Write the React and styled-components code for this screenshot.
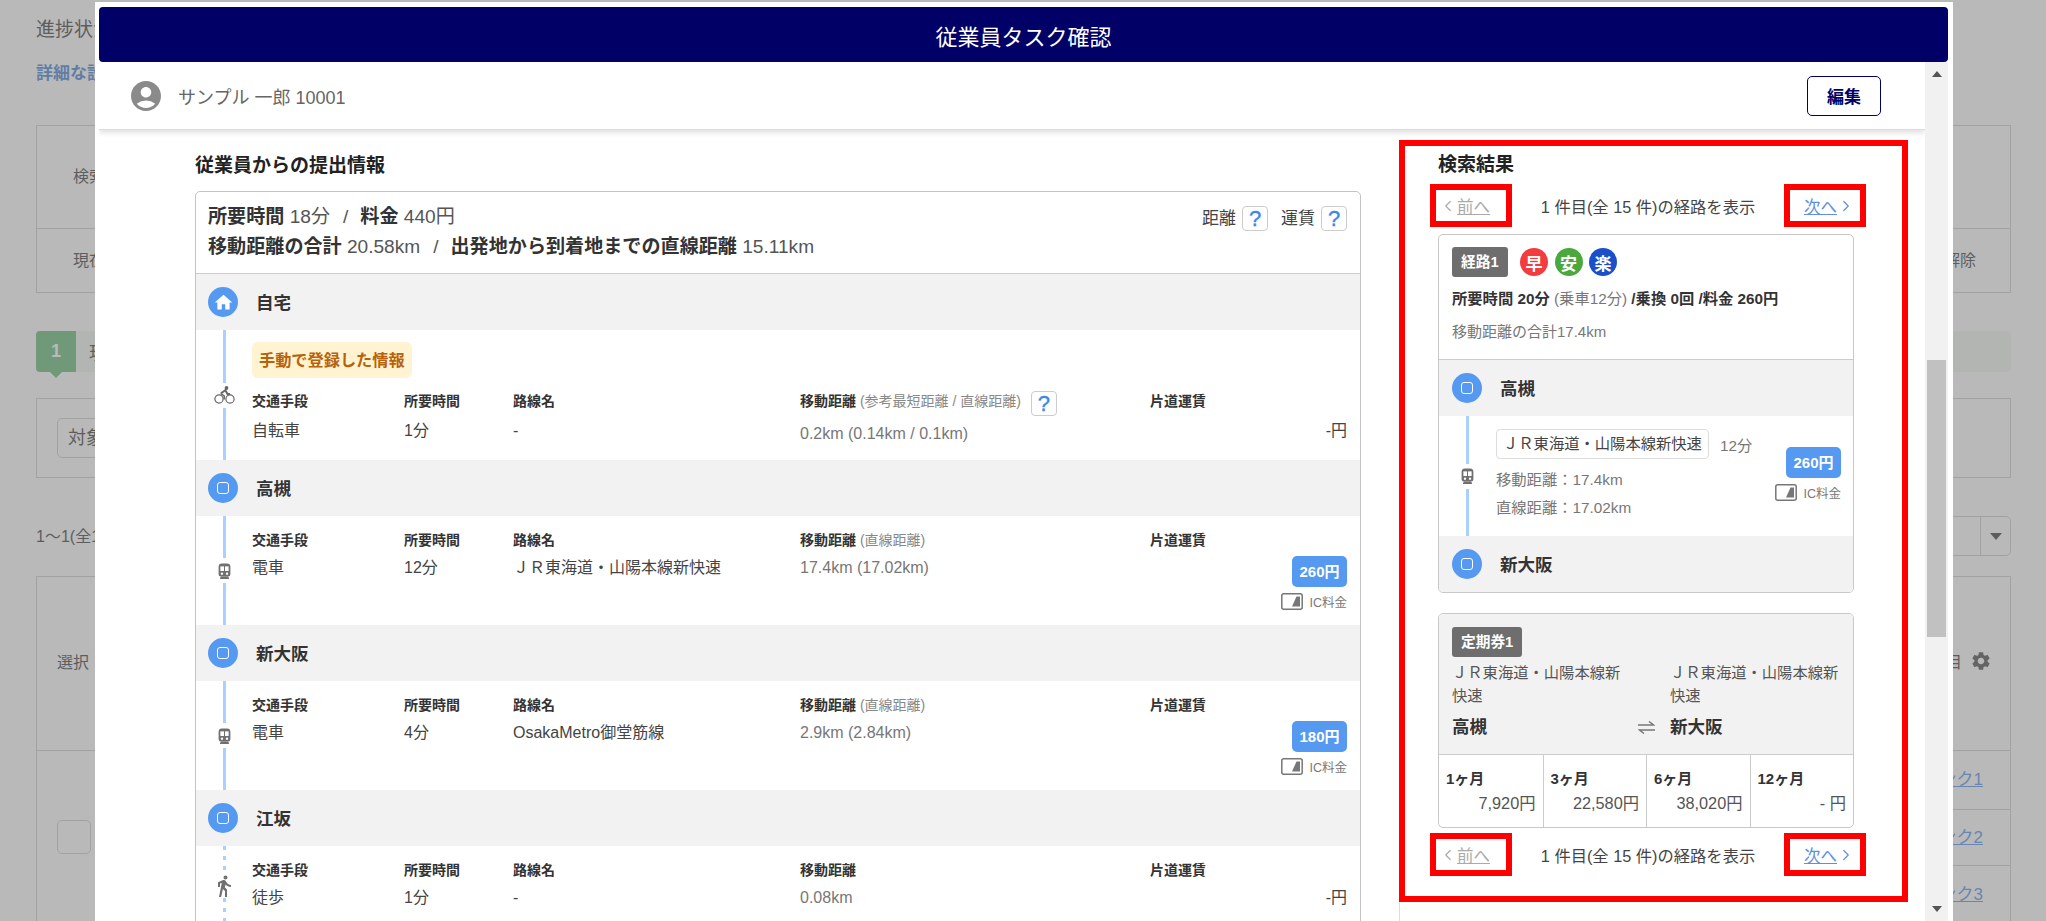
import React from "react";
import styled, { createGlobalStyle } from "styled-components";
import { MdAccountCircle, MdHome, MdDirectionsWalk, MdSettings } from "react-icons/md";
import { ChevronLeft, ChevronRight } from "lucide-react";

const GlobalStyle = createGlobalStyle`
  html, body {
    margin: 0;
    height: 100%;
    overflow: hidden;
  }
  body {
    font-family: "Liberation Sans", "Noto Sans CJK JP", sans-serif;
    color: #333;
    background: #fff;
  }
  * {
    box-sizing: border-box;
  }
`;

const TrainIcon = () => (
  <svg width="13" height="16" viewBox="0 0 15 19">
    <path d="M4.500 .5h6a4 4 0 0 1 4 4V13a3 3 0 0 1-3 3h-8a3 3 0 0 1-3-3V4.500a4 4 0 0 1 4-4z" fill="#707070" />
    <rect x="2.600" y="4" width="4.300" height="5.500" fill="#fff" />
    <rect x="8.100" y="4" width="4.300" height="5.500" fill="#fff" />
    <circle cx="4.500" cy="12.700" r="1.400" fill="#fff" />
    <circle cx="10.500" cy="12.700" r="1.400" fill="#fff" />
    <path d="M3 16h9l1 3H2z" fill="#707070" />
  </svg>
);

const BikeIcon = () => (
  <svg width="21" height="18" viewBox="0 0 21 18" fill="none" stroke="#666">
    <circle cx="5" cy="13" r="4.100" strokeWidth="1.200" />
    <circle cx="16" cy="13" r="4.100" strokeWidth="1.200" />
    <circle cx="12.500" cy="2" r="1.900" fill="#666" stroke="none" />
    <path d="M6.800 7.500l4.500-3.300 2.200 3.800H16" strokeWidth="2" />
    <path d="M6.800 7.500l3.400 2.500v3.500" strokeWidth="1.500" />
  </svg>
);

const IcIcon = () => (
  <svg width="22" height="17" viewBox="0 0 22 17">
    <rect x="0.800" y="0.800" width="20.400" height="15.400" rx="2" fill="#fff" stroke="#777" strokeWidth="1.500" />
    <polygon points="11,13.500 15.500,3.500 19,3.500 19,13.500" fill="#777" />
  </svg>
);

const SwapIcon = () => (
  <svg width="17" height="13" viewBox="0 0 17 13" fill="none" stroke="#777" strokeWidth="1.500">
    <path d="M0 4h15.500L11 .5" />
    <path d="M17 9H1.500L6 12.500" />
  </svg>
);

const BackPage = () => (
  <Page>
    <PageTitle>進捗状況一覧</PageTitle>
    <DetailLink>詳細な設定はこちら</DetailLink>
    <InfoTable>
      <InfoRow $h={102}>
        <span>検索条件</span>
      </InfoRow>
      <InfoRow $h={64}>
        <span>現在の条件</span>
        <span>解除</span>
      </InfoRow>
    </InfoTable>
    <StepBand>
      <StepNumber>1</StepNumber>
      <StepLabel>現在の対象者</StepLabel>
    </StepBand>
    <FilterBox>
      <FilterButton>対象者</FilterButton>
    </FilterBox>
    <CountRow>
      <CountText>1〜1(全1件)</CountText>
      <PageSelect>
        <CaretBox />
      </PageSelect>
    </CountRow>
    <BackTable>
      <BackHead>
        <span>選択</span>
        <HeadRight>
          項目
          <MdSettings size={22} />
        </HeadRight>
      </BackHead>
      <BackBody>
        <CheckCell>
          <BackCheck />
        </CheckCell>
        <LinkList>
          <LinkRow $h={58}>
            <BackLink href="#">リンク1</BackLink>
          </LinkRow>
          <LinkRow $h={56}>
            <BackLink href="#">リンク2</BackLink>
          </LinkRow>
          <LinkRow $h={58}>
            <BackLink href="#">リンク3</BackLink>
          </LinkRow>
        </LinkList>
      </BackBody>
    </BackTable>
  </Page>
);

const Rail = ({ icon, dashed }) => (
  <RailBox>
    <RailLine $dashed={dashed} />
    <RailIcon>{icon}</RailIcon>
    <RailLine $dashed={dashed} />
  </RailBox>
);

const Station = ({ name, home, compact }) => (
  <StationRow $compact={compact}>
    <StationDot>{home ? <MdHome size={21} color="#fff" /> : <StationMark />}</StationDot>
    <StationName>{name}</StationName>
  </StationRow>
);

const Help = () => <HelpButton>?</HelpButton>;

const Fare = ({ price, offset }) => (
  <FareBox $offset={offset}>
    <FareBadge>{price}</FareBadge>
    <IcRow>
      <IcIcon />
      IC料金
    </IcRow>
  </FareBox>
);

const legs = [
  {
    id: "bike",
    icon: <BikeIcon />,
    manual: true,
    mode: "自転車",
    time: "1分",
    line: "-",
    distLabel: "(参考最短距離 / 直線距離)",
    help: true,
    dist: "0.2km (0.14km / 0.1km)",
    stop: "高槻",
  },
  {
    id: "jr",
    icon: <TrainIcon />,
    mode: "電車",
    time: "12分",
    line: "ＪＲ東海道・山陽本線新快速",
    distLabel: "(直線距離)",
    dist: "17.4km (17.02km)",
    price: "260円",
    stop: "新大阪",
  },
  {
    id: "metro",
    icon: <TrainIcon />,
    mode: "電車",
    time: "4分",
    line: "OsakaMetro御堂筋線",
    distLabel: "(直線距離)",
    dist: "2.9km (2.84km)",
    price: "180円",
    stop: "江坂",
  },
  {
    id: "walk",
    icon: <MdDirectionsWalk size={24} color="#707070" />,
    dashed: true,
    mode: "徒歩",
    time: "1分",
    line: "-",
    dist: "0.08km",
  },
];

const LegRow = ({ leg }) => (
  <Leg>
    <Rail icon={leg.icon} dashed={leg.dashed} />
    <LegBody $manual={leg.manual}>
      {leg.manual && <ManualTag>手動で登録した情報</ManualTag>}
      <LegGrid $tight={leg.help}>
        <LegHead>交通手段</LegHead>
        <LegHead>所要時間</LegHead>
        <LegHead>路線名</LegHead>
        <LegHead>
          <span>
            移動距離 {leg.distLabel && <HeadNote>{leg.distLabel}</HeadNote>}
          </span>
          {leg.help && <Help />}
        </LegHead>
        <LegHead>片道運賃</LegHead>
        <LegValue>{leg.mode}</LegValue>
        <LegValue>{leg.time}</LegValue>
        <LegValue>{leg.line}</LegValue>
        <LegValue $muted $drop={leg.help}>{leg.dist}</LegValue>
        {leg.price ? <Fare price={leg.price} /> : <NoFare>-円</NoFare>}
      </LegGrid>
    </LegBody>
  </Leg>
);

const Pager = () => (
  <PagerRow>
    <PagerBox>
      <ChevronLeft size={18} color="#aaa" strokeWidth={1.6} />
      <PagerLink $off href="#">前へ</PagerLink>
    </PagerBox>
    <span>1 件目(全 15 件)の経路を表示</span>
    <PagerBox $end>
      <PagerLink href="#">次へ</PagerLink>
      <ChevronRight size={18} color="#5f8fe0" strokeWidth={1.6} />
    </PagerBox>
  </PagerRow>
);

const passPrices = [
  ["1ヶ月", "7,920円"],
  ["3ヶ月", "22,580円"],
  ["6ヶ月", "38,020円"],
  ["12ヶ月", "- 円"],
];

const App = () => (
  <>
    <GlobalStyle />
    <BackPage />
    <Overlay />
    <Modal>
      <ModalTitle>従業員タスク確認</ModalTitle>
      <ModalMain>
        <ScrollArea>
          <UserBar>
            <UserName>
              <MdAccountCircle size={36} color="#8a8a8a" />
              サンプル 一郎 10001
            </UserName>
            <EditButton>編集</EditButton>
          </UserBar>
          <Columns>
            <LeftColumn>
              <SectionTitle>従業員からの提出情報</SectionTitle>
              <RouteCard>
                <Summary>
                  <div>
                    <SummaryLine>
                      <b>所要時間</b> 18分<Slash>/</Slash><b>料金</b> 440円
                    </SummaryLine>
                    <SummaryLine>
                      <b>移動距離の合計</b> 20.58km<Slash>/</Slash>
                      <b>出発地から到着地までの直線距離</b> 15.11km
                    </SummaryLine>
                  </div>
                  <HelpLinks>
                    距離 <Help />
                    <HelpGap />
                    運賃 <Help />
                  </HelpLinks>
                </Summary>
                <Station name="自宅" home />
                {legs.map((leg) => (
                  <React.Fragment key={leg.id}>
                    <LegRow leg={leg} />
                    {leg.stop && <Station name={leg.stop} />}
                  </React.Fragment>
                ))}
              </RouteCard>
            </LeftColumn>
            <ResultColumn>
              <ResultBox>
                <ResultTitle>検索結果</ResultTitle>
                <Pager />
                <ResultCard>
                  <CardHead>
                    <TagRow>
                      <GreyTag>経路1</GreyTag>
                      <Mark $color="#f23c3f">早</Mark>
                      <Mark $color="#4aa83c">安</Mark>
                      <Mark $color="#1b4fc9">楽</Mark>
                    </TagRow>
                    <CardSummary>
                      <b>所要時間 20分</b> <Muted>(乗車12分)</Muted> <b>/乗換 0回 /料金 260円</b>
                    </CardSummary>
                    <CardDistance>移動距離の合計17.4km</CardDistance>
                  </CardHead>
                  <Station name="高槻" compact />
                  <CardLeg>
                    <Rail icon={<TrainIcon />} />
                    <CardLegBody>
                      <div>
                        <LineRow>
                          <LineChip>ＪＲ東海道・山陽本線新快速</LineChip>
                          <Muted>12分</Muted>
                        </LineRow>
                        <DistanceList>
                          <div>移動距離：17.4km</div>
                          <div>直線距離：17.02km</div>
                        </DistanceList>
                      </div>
                      <Fare price="260円" offset={18} />
                    </CardLegBody>
                  </CardLeg>
                  <Station name="新大阪" compact />
                </ResultCard>
                <PassCard>
                  <PassHead>
                    <GreyTag>定期券1</GreyTag>
                    <PassLines>
                      <PassLine>ＪＲ東海道・山陽本線新快速</PassLine>
                      <PassLine>ＪＲ東海道・山陽本線新快速</PassLine>
                    </PassLines>
                    <PassStops>
                      <PassFrom>
                        高槻
                        <SwapIcon />
                      </PassFrom>
                      <span>新大阪</span>
                    </PassStops>
                  </PassHead>
                  <PriceGrid>
                    {passPrices.map(([term, price]) => (
                      <PriceCell key={term}>
                        <b>{term}</b>
                        <PriceValue>{price}</PriceValue>
                      </PriceCell>
                    ))}
                  </PriceGrid>
                </PassCard>
                <Pager />
              </ResultBox>
            </ResultColumn>
          </Columns>
        </ScrollArea>
        <ScrollBar>
          <ScrollArrow $up />
          <ScrollThumb />
          <ScrollArrow />
        </ScrollBar>
      </ModalMain>
    </Modal>
  </>
);

export default App;

/* page behind the dialog */
const Page = styled.div`
  height: 921px;
  overflow: hidden;
  padding: 18px 35px 0 36px;
  font-size: 18px;
  color: #333;
`;

const PageTitle = styled.div`
  font-size: 19px;
  line-height: 24px;
`;

const DetailLink = styled.a`
  display: block;
  margin-top: 20px;
  font-size: 17px;
  font-weight: bold;
  line-height: 24px;
  color: #3a7bd0;
`;

const InfoTable = styled.div`
  margin-top: 39px;
  border: 1px solid #ccc;
`;

const InfoRow = styled.div`
  display: flex;
  align-items: center;
  justify-content: space-between;
  height: ${(p) => p.$h}px;
  padding: 0 34px 4px 36px;
  font-size: 16px;
  & + & {
    border-top: 1px solid #ccc;
  }
`;

const StepBand = styled.div`
  display: flex;
  align-items: center;
  margin-top: 38px;
  height: 41px;
  background: #f0f5f0;
  border-radius: 4px;
`;

const StepNumber = styled.div`
  position: relative;
  width: 40px;
  height: 41px;
  display: flex;
  align-items: center;
  justify-content: center;
  background: #5cb870;
  color: #fff;
  font-weight: bold;
  border-radius: 4px 0 0 4px;
  &::after {
    content: "";
    position: absolute;
    left: 14px;
    bottom: -6px;
    border-top: 6px solid #5cb870;
    border-left: 6px solid transparent;
    border-right: 6px solid transparent;
  }
`;

const StepLabel = styled.div`
  margin-left: 13px;
`;

const FilterBox = styled.div`
  margin-top: 26px;
  height: 80px;
  border: 1px solid #ccc;
  padding: 19px 20px;
`;

const FilterButton = styled.div`
  width: 150px;
  height: 40px;
  padding: 0 10px;
  line-height: 38px;
  border: 1px solid #ccc;
  border-radius: 5px;
  font-size: 18px;
`;

const CountRow = styled.div`
  display: flex;
  align-items: center;
  justify-content: space-between;
  margin-top: 38px;
  height: 40px;
  font-size: 16px;
`;

const CountText = styled.span`
  padding-bottom: 3px;
`;

const PageSelect = styled.div`
  display: flex;
  justify-content: flex-end;
  width: 400px;
  height: 40px;
  border: 1px solid #ccc;
  border-radius: 5px;
`;

const CaretBox = styled.div`
  width: 30px;
  display: flex;
  align-items: center;
  justify-content: center;
  border-left: 1px solid #ccc;
  &::before {
    content: "";
    border-top: 7px solid #333;
    border-left: 6px solid transparent;
    border-right: 6px solid transparent;
  }
`;

const BackTable = styled.div`
  margin-top: 20px;
  border: 1px solid #ccc;
  font-size: 16px;
`;

const BackHead = styled.div`
  display: flex;
  align-items: center;
  justify-content: space-between;
  height: 173px;
  padding: 0 18px 6px 20px;
`;

const HeadRight = styled.div`
  display: flex;
  align-items: center;
  gap: 8px;
  svg {
    color: #444;
  }
`;

const BackBody = styled.div`
  display: flex;
  justify-content: space-between;
  border-top: 1px solid #ccc;
`;

const CheckCell = styled.div`
  height: 172px;
  display: flex;
  align-items: center;
  padding-left: 20px;
`;

const BackCheck = styled.div`
  width: 34px;
  height: 34px;
  border: 1px solid #ccc;
  border-radius: 5px;
  background: #fff;
`;

const LinkList = styled.div`
  width: 400px;
`;

const LinkRow = styled.div`
  display: flex;
  align-items: center;
  justify-content: flex-end;
  height: ${(p) => p.$h}px;
  padding: 0 27px 5px 0;
  & + & {
    border-top: 1px solid #ccc;
  }
`;

const BackLink = styled.a`
  color: #4d8fe8;
  font-size: 17px;
  text-decoration: underline;
`;

const Overlay = styled.div`
  position: fixed;
  inset: 0;
  background: rgba(128, 128, 128, 0.55);
`;

/* dialog */
const Modal = styled.div`
  position: fixed;
  top: 2px;
  left: 95px;
  right: 93px;
  bottom: 0;
  display: flex;
  flex-direction: column;
  padding: 5px 5px 0 4px;
  background: #fff;
`;

const ModalTitle = styled.div`
  flex: none;
  height: 55px;
  display: flex;
  align-items: center;
  justify-content: center;
  background: #006;
  color: #fff;
  font-size: 22px;
  border-radius: 4px;
`;

const ModalMain = styled.div`
  flex: 1;
  min-height: 0;
  display: flex;
`;

const ScrollArea = styled.div`
  flex: 1;
  min-width: 0;
  overflow: hidden;
`;

const UserBar = styled.div`
  height: 68px;
  display: flex;
  align-items: center;
  justify-content: space-between;
  padding: 0 44px 0 29px;
  border-bottom: 1px solid #ddd;
  box-shadow: 0 3px 5px rgba(0, 0, 0, 0.12);
`;

const UserName = styled.div`
  display: flex;
  align-items: center;
  gap: 14px;
  font-size: 18px;
  color: #666;
`;

const EditButton = styled.button`
  width: 74px;
  height: 40px;
  background: #fff;
  border: 1.5px solid #006;
  border-radius: 5px;
  color: #006;
  font-family: inherit;
  font-size: 17px;
  font-weight: bold;
`;

const Columns = styled.div`
  display: flex;
  padding: 10px 17px 0 96px;
`;

const LeftColumn = styled.div`
  flex: none;
  width: 1166px;
`;

const SectionTitle = styled.div`
  margin-top: 14px;
  font-size: 19px;
  font-weight: bold;
  line-height: 24px;
  color: #222;
`;

const RouteCard = styled.div`
  margin-top: 13px;
  border: 1px solid #c4c4c4;
  border-radius: 5px;
  overflow: hidden;
`;

const Summary = styled.div`
  display: flex;
  justify-content: space-between;
  height: 82px;
  padding: 10px 13px 0 12px;
  border-bottom: 1.5px solid #ccc;
`;

const SummaryLine = styled.div`
  font-size: 19.100px;
  line-height: 30px;
  color: #555;
  b {
    color: #333;
  }
`;

const Slash = styled.span`
  margin: 0 12px 0 13px;
`;

const HelpLinks = styled.div`
  display: flex;
  align-items: flex-start;
  gap: 6px;
  padding-top: 4px;
  font-size: 17px;
  line-height: 25px;
  color: #444;
`;

const HelpGap = styled.span`
  width: 1px;
`;

const HelpButton = styled.span`
  display: inline-block;
  flex: none;
  width: 26px;
  height: 25px;
  border: 1px solid #ccc;
  border-radius: 4px;
  background: #fff;
  text-align: center;
  vertical-align: middle;
  font-size: 22px;
  font-weight: normal;
  line-height: 24px;
  color: #3c87ea;
  -webkit-text-stroke: 0.4px #3c87ea;
`;

const StationRow = styled.div`
  display: flex;
  align-items: center;
  height: 56px;
  padding-left: ${(p) => (p.$compact ? 13 : 12)}px;
  background: #f2f2f2;
`;

const StationDot = styled.div`
  flex: none;
  width: 30px;
  height: 30px;
  display: flex;
  align-items: center;
  justify-content: center;
  background: #5599f0;
  border-radius: 50%;
`;

const StationMark = styled.span`
  width: 12px;
  height: 12px;
  border: 1.500px solid #fff;
  border-radius: 3px;
`;

const StationName = styled.div`
  margin-left: 18px;
  padding-bottom: 2px;
  font-size: 17.500px;
  font-weight: bold;
  color: #333;
`;

const Leg = styled.div`
  display: flex;
`;

const RailBox = styled.div`
  flex: none;
  width: 56px;
  display: flex;
  flex-direction: column;
  align-items: center;
`;

const RailLine = styled.div`
  flex: 1;
  width: 3px;
  background: ${(p) =>
    p.$dashed
      ? "repeating-linear-gradient(to bottom, #a9d0ff 0 4px, transparent 4px 10px)"
      : "#a9d0ff"};
`;

const RailIcon = styled.div`
  flex: none;
  height: 25px;
  display: flex;
  align-items: center;
  justify-content: center;
`;

const LegBody = styled.div`
  flex: 1;
  min-width: 0;
  padding: ${(p) => (p.$manual ? "12px 13px 14px 0" : "14px 13px 15px 0")};
`;

const ManualTag = styled.div`
  width: fit-content;
  height: 36px;
  margin-bottom: 13px;
  padding: 0 7px;
  background: #fff3d1;
  border-radius: 6px;
  color: #b8620a;
  font-size: 16.200px;
  font-weight: bold;
  line-height: 36px;
`;

const LegGrid = styled.div`
  display: grid;
  grid-template-columns: 152px 109px 287px 350px 1fr;
  row-gap: ${(p) => (p.$tight ? 3 : 6)}px;
`;

const LegHead = styled.div`
  display: flex;
  align-items: flex-start;
  gap: 10px;
  min-height: 20px;
  font-size: 14px;
  font-weight: bold;
  line-height: 20px;
  color: #333;
`;

const HeadNote = styled.span`
  font-weight: normal;
  color: #888;
`;

const LegValue = styled.div`
  padding-top: ${(p) => (p.$drop ? 3 : 0)}px;
  font-size: 16px;
  line-height: 24px;
  color: ${(p) => (p.$muted ? "#777" : "#444")};
`;

const NoFare = styled.div`
  font-size: 16px;
  line-height: 24px;
  text-align: right;
  color: #444;
`;

const FareBox = styled.div`
  display: flex;
  flex-direction: column;
  align-items: flex-end;
  gap: 6px;
  margin-top: ${(p) => p.$offset || 0}px;
`;

const FareBadge = styled.div`
  width: 55px;
  height: 31px;
  background: #5599f0;
  border-radius: 5px;
  color: #fff;
  font-size: 15px;
  font-weight: bold;
  line-height: 31px;
  text-align: center;
`;

const IcRow = styled.div`
  display: flex;
  align-items: center;
  gap: 6px;
  height: 17px;
  font-size: 12.500px;
  color: #777;
`;

/* search result column */
const ResultColumn = styled.div`
  flex: 1;
  margin-left: 38px;
  border-left: 1px solid #ddd;
`;

const ResultBox = styled.div`
  margin-left: -1px;
  padding: 7px 0 20px 25px;
  border: 6px solid #f00;
`;

const ResultTitle = styled.div`
  margin-left: 8px;
  font-size: 19px;
  font-weight: bold;
  line-height: 24px;
  color: #222;
`;

const PagerRow = styled.div`
  display: flex;
  align-items: center;
  justify-content: space-between;
  width: 436px;
  height: 43px;
  margin-top: 7px;
  font-size: 16.300px;
  color: #444;
  &:last-child {
    margin-top: 5px;
  }
`;

const PagerBox = styled.div`
  width: 82px;
  height: 43px;
  display: flex;
  align-items: center;
  justify-content: ${(p) => (p.$end ? "flex-end" : "flex-start")};
  padding: 0 ${(p) => (p.$end ? 5 : 0)}px 0 ${(p) => (p.$end ? 0 : 3)}px;
  border: 6px solid #f00;
`;

const PagerLink = styled.a`
  font-size: 16.500px;
  color: ${(p) => (p.$off ? "#aaa" : "#5f8fe0")};
  text-decoration: underline;
`;

const ResultCard = styled.div`
  width: 416px;
  margin: 7px 0 0 8px;
  border: 1px solid #c8c8c8;
  border-radius: 5px;
  overflow: hidden;
`;

const CardHead = styled.div`
  height: 125px;
  padding: 12px 13px 0;
  border-bottom: 1.500px solid #ccc;
`;

const TagRow = styled.div`
  display: flex;
  align-items: center;
  gap: 6.500px;
`;

const GreyTag = styled.div`
  width: fit-content;
  height: 30px;
  margin-right: 6px;
  padding: 0 9px;
  background: #6e6e6e;
  border-radius: 3px;
  color: #fff;
  font-size: 14.700px;
  font-weight: bold;
  line-height: 30px;
`;

const Mark = styled.div`
  width: 28px;
  height: 28px;
  display: flex;
  align-items: center;
  justify-content: center;
  background: ${(p) => p.$color};
  border-radius: 50%;
  color: #fff;
  font-size: 17px;
  font-weight: bold;
`;

const CardSummary = styled.div`
  margin-top: 9px;
  font-size: 15.300px;
  line-height: 26px;
  color: #333;
`;

const Muted = styled.span`
  font-weight: normal;
  color: #777;
`;

const CardDistance = styled.div`
  margin-top: 7px;
  font-size: 15px;
  line-height: 26px;
  color: #777;
`;

const CardLeg = styled.div`
  display: flex;
  height: 120px;
`;

const CardLegBody = styled.div`
  flex: 1;
  min-width: 0;
  display: flex;
  justify-content: space-between;
  padding: 13px 12px 0 1px;
`;

const LineRow = styled.div`
  display: flex;
  align-items: center;
  gap: 11px;
  font-size: 15.300px;
`;

const LineChip = styled.div`
  width: 213px;
  height: 30px;
  padding-left: 6px;
  border: 1px solid #ddd;
  border-radius: 4px;
  line-height: 28px;
  white-space: nowrap;
  color: #444;
`;

const DistanceList = styled.div`
  margin-top: 7px;
  font-size: 15.300px;
  line-height: 28px;
  color: #777;
`;

const PassCard = styled.div`
  width: 416px;
  margin: 20px 0 0 8px;
  border: 1px solid #c8c8c8;
  border-radius: 5px;
  overflow: hidden;
`;

const PassHead = styled.div`
  height: 140px;
  padding: 13px 13px 0;
  background: #f2f2f2;
`;

const PassLines = styled.div`
  display: grid;
  grid-template-columns: 218px 1fr;
  margin-top: 4px;
`;

const PassLine = styled.div`
  width: 175px;
  font-size: 15.300px;
  line-height: 23px;
  color: #555;
`;

const PassStops = styled.div`
  display: grid;
  grid-template-columns: 218px 1fr;
  margin-top: 8px;
  font-size: 17.500px;
  font-weight: bold;
  line-height: 24px;
`;

const PassFrom = styled.div`
  display: flex;
  align-items: center;
  justify-content: space-between;
  padding-right: 15px;
`;

const PriceGrid = styled.div`
  display: grid;
  grid-template-columns: repeat(4, 1fr);
  border-top: 1px solid #ccc;
`;

const PriceCell = styled.div`
  height: 72px;
  padding: 12px 7px 0;
  font-size: 15px;
  line-height: 24px;
  & + & {
    border-left: 1px solid #ccc;
  }
`;

const PriceValue = styled.div`
  text-align: right;
  font-size: 16.300px;
  color: #555;
`;

/* scrollbar */
const ScrollBar = styled.div`
  flex: none;
  width: 23px;
  display: flex;
  flex-direction: column;
  align-items: center;
  background: #f1f1f1;
`;

const ScrollArrow = styled.div`
  flex: none;
  height: 24px;
  width: 100%;
  display: flex;
  align-items: center;
  justify-content: center;
  margin-top: ${(p) => (p.$up ? 0 : "auto")};
  &::before {
    content: "";
    border-left: 5px solid transparent;
    border-right: 5px solid transparent;
    ${(p) => (p.$up ? "border-bottom: 6px solid #555;" : "border-top: 6px solid #555;")}
  }
`;

const ScrollThumb = styled.div`
  flex: none;
  width: 19px;
  height: 277px;
  margin-top: 274px;
  background: #c1c1c1;
`;
